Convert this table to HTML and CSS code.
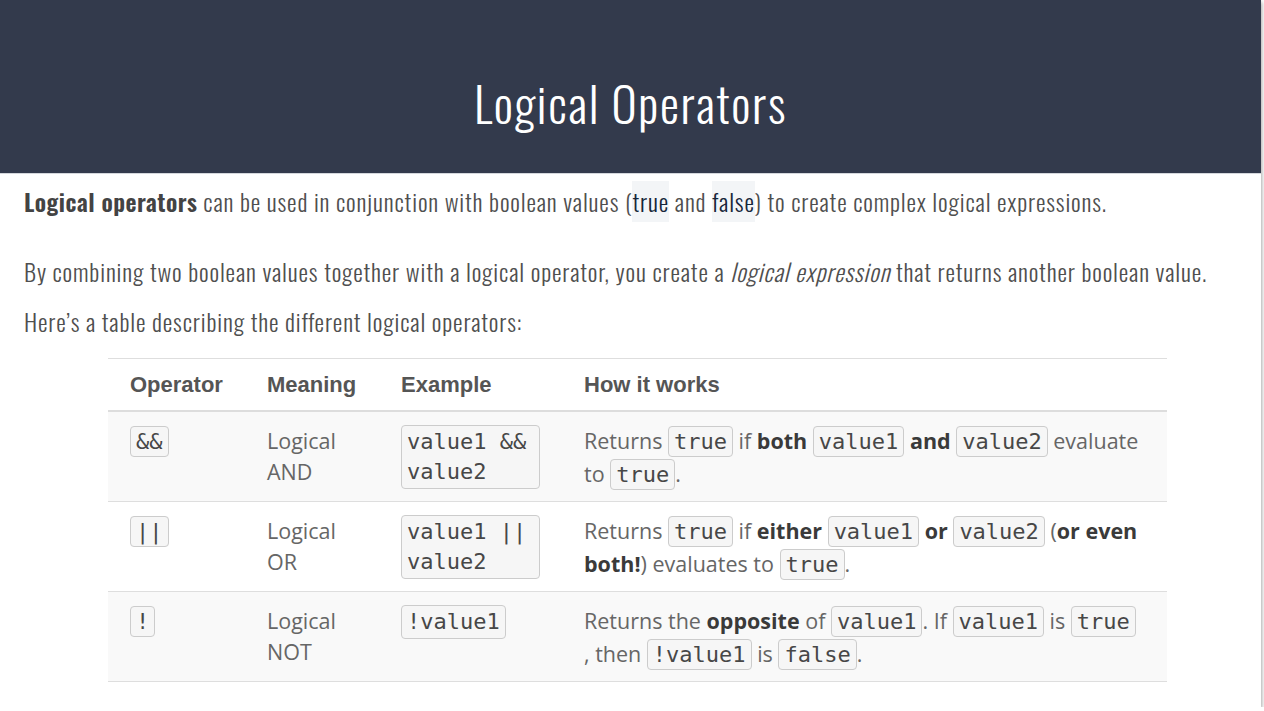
FILE: index.html
```html
<!DOCTYPE html>
<html>
<head>
<meta charset="utf-8">
<title>Logical Operators</title>
<link rel="stylesheet" href="styles.css">
</head>
<body>
<div class="slide">
  <header class="slide-header">
    <h1 class="slide-title">Logical Operators</h1>
  </header>
  <main class="slide-body">
    <p class="para para-first"><b class="strong">Logical operators</b> can be used in conjunction with boolean values (<span class="kw">true</span> and <span class="kw">false</span>) to create complex logical expressions.</p>
    <p class="para para-second">By combining two boolean values together with a logical operator, you create a <i>logical expression</i> that returns another boolean value.</p>
    <p class="para para-third">Here’s a table describing the different logical operators:</p>

    <div class="ops-table">
      <div class="ops-row ops-head">
        <div class="cell c-op">Operator</div>
        <div class="cell c-mean">Meaning</div>
        <div class="cell c-ex">Example</div>
        <div class="cell c-how">How it works</div>
      </div>
      <div class="ops-row shaded">
        <div class="cell c-op"><code class="code">&amp;&amp;</code></div>
        <div class="cell c-mean">Logical<br>AND</div>
        <div class="cell c-ex"><code class="code code-ex">value1 &amp;&amp; value2</code></div>
        <div class="cell c-how">Returns <code class="code">true</code> if <b>both</b> <code class="code">value1</code> <b>and</b> <code class="code">value2</code> evaluate to <code class="code">true</code>.</div>
      </div>
      <div class="ops-row">
        <div class="cell c-op"><code class="code">||</code></div>
        <div class="cell c-mean">Logical<br>OR</div>
        <div class="cell c-ex"><code class="code code-ex">value1 || value2</code></div>
        <div class="cell c-how">Returns <code class="code">true</code> if <b>either</b> <code class="code">value1</code> <b>or</b> <code class="code">value2</code> (<b>or even both!</b>) evaluates to <code class="code">true</code>.</div>
      </div>
      <div class="ops-row shaded">
        <div class="cell c-op"><code class="code">!</code></div>
        <div class="cell c-mean">Logical<br>NOT</div>
        <div class="cell c-ex"><code class="code code-ex">!value1</code></div>
        <div class="cell c-how">Returns the <b>opposite</b> of <code class="code">value1</code>. If <code class="code">value1</code> is <code class="code">true</code><br>, then <code class="code">!value1</code> is <code class="code">false</code>.</div>
      </div>
    </div>
  </main>
</div>
</body>
</html>
```
FILE: styles.css
```css
html, body {
  margin: 0;
  padding: 0;
  background: #ffffff;
}

.slide {
  width: 1261px;
  height: 707px;
  background: #ffffff;
  box-shadow: 1px 2px 4px rgba(0, 0, 0, 0.35);
  overflow: hidden;
}

.slide-header {
  height: 174px;
  background: #333a4c;
  border-bottom: 1px solid #d4d7dc;
  box-sizing: border-box;
}

.slide-title {
  margin: 0;
  padding-top: 79px;
  text-align: center;
  font-family: "Oswald", "Roboto Condensed", sans-serif;
  font-weight: 300;
  font-size: 48px;
  line-height: 48px;
  letter-spacing: 0.034em;
  color: #ffffff;
}

.slide-body {
  padding: 0 0 0 24px;
}

.para {
  margin: 0;
  font-family: "Oswald", "Roboto Condensed", sans-serif;
  font-weight: 300;
  font-size: 24px;
  line-height: 30px;
  letter-spacing: 0.035em;
  color: #4f4f4f;
}

.para-first { margin-top: 12px; }
.para-second { margin-top: 40px; }
.para-third { margin-top: 20px; }

.strong {
  font-weight: 600;
  letter-spacing: 0.02em;
  color: #434343;
}

.kw {
  background: #f3f5f7;
  color: #16263a;
  padding: 2px 0 3px;
}

/* Table */
.ops-table {
  margin: 22px 0 0 84px;
  width: 1059px;
  border-top: 1px solid #dedede;
  border-bottom: 1px solid #dedede;
  font-family: "Open Sans", "Noto Sans", sans-serif;
  font-size: 21.5px;
  color: #666666;
}

.ops-row {
  display: grid;
  grid-template-columns: 147px 134px 183px 1fr;
  border-top: 1px solid #dedede;
}

.ops-row.shaded { background: #f9f9f9; }

.ops-head {
  border-top: none;
  border-bottom: 2px solid #dddddd;
  font-family: "Liberation Sans", Arial, sans-serif;
  font-size: 22px;
  font-weight: 700;
  color: #555555;
}

.ops-head + .ops-row { border-top: none; }

.cell {
  padding: 13px 12px 11px 12px;
  line-height: 31px;
}

.ops-head .cell {
  padding-top: 11px;
  padding-bottom: 10px;
  line-height: 30px;
}

.c-op { padding-left: 22px; }
.c-ex { padding-right: 32px; }
.c-how { line-height: 33px; padding-top: 12px; padding-right: 22px; }

.c-how b, .c-mean b {
  font-weight: 700;
  color: #3a3a3a;
}

.code {
  font-family: "DejaVu Sans Mono", "Liberation Mono", monospace;
  font-size: 22px;
  line-height: 1;
  color: #474747;
  background: #f6f6f6;
  border: 1px solid #cccccc;
  border-radius: 4px;
  padding: 2px 5px;
}

.code-ex {
  display: inline-block;
  vertical-align: top;
  line-height: 30px;
  padding: 1px 5px;
}
```
